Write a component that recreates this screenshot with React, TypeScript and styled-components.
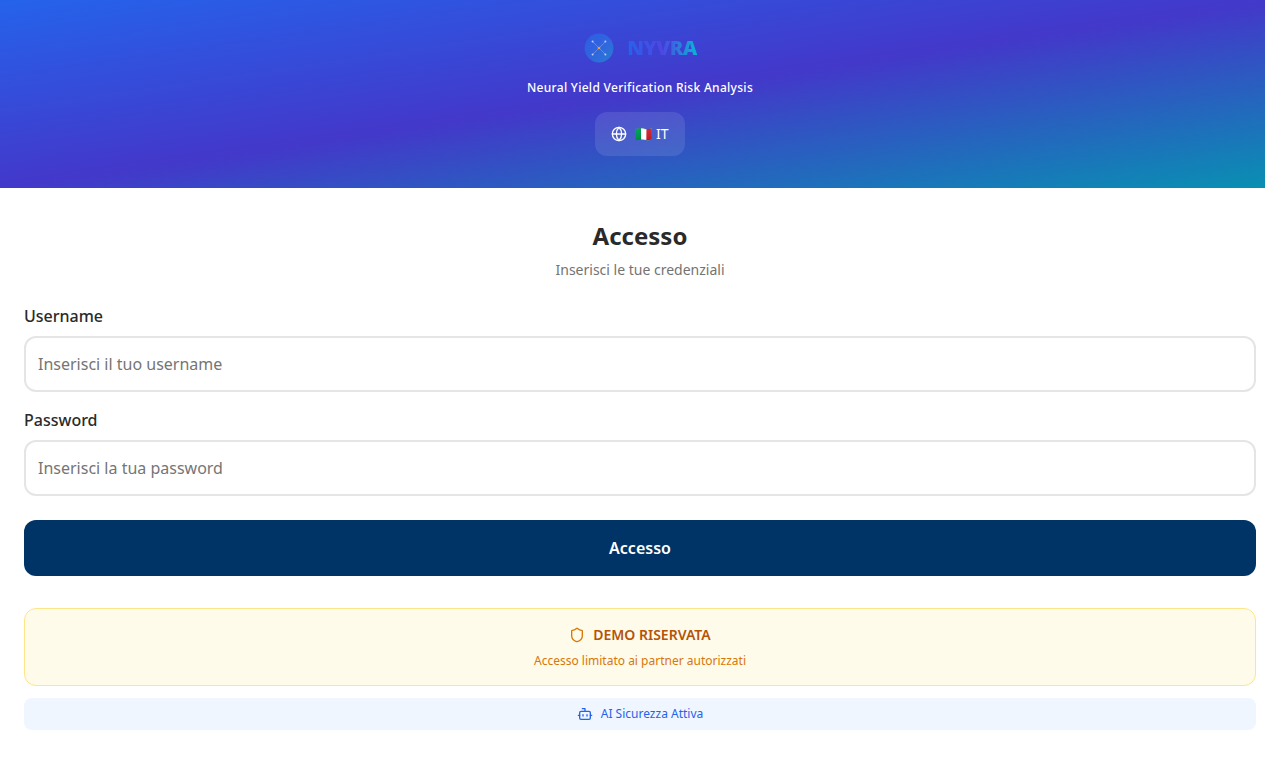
import React from "react";
import styled, { createGlobalStyle } from "styled-components";
import { Bot, Globe, Shield } from "lucide-react";

const GlobalStyle = createGlobalStyle`
  *, *::before, *::after { box-sizing: border-box; }
  body {
    margin: 0;
    background: #ffffff;
    color: #2a2a2a;
    font-family: "Noto Sans", sans-serif;
    font-size: 16px;
    line-height: 24px;
    overflow-x: hidden;
  }
  button, input { font: inherit; }
`;

const Page = styled.div`
  width: calc(100% + 15px);
`;

const Header = styled.header`
  display: flex;
  flex-direction: column;
  align-items: center;
  gap: 16px;
  padding: 32px 24px;
  background: linear-gradient(to bottom right, #2563eb, #4338ca, #0891b2);
`;

const Brand = styled.div`
  display: flex;
  align-items: center;
  gap: 12px;
  height: 32px;
`;

const BrandName = styled.h1`
  margin: 0;
  font-size: 20px;
  line-height: 28px;
  font-weight: 900;
  letter-spacing: -0.025em;
  color: transparent;
  background: linear-gradient(to right, #2563eb, #4f46e5, #06b6d4);
  background-clip: text;
  -webkit-background-clip: text;
`;

const Tagline = styled.p`
  margin: 0;
  font-size: 12px;
  line-height: 16px;
  font-weight: 500;
  letter-spacing: 0.025em;
  color: #ffffff;
`;

const LanguageButton = styled.button`
  display: flex;
  align-items: center;
  gap: 8px;
  height: 44px;
  padding: 0 16px;
  border: 0;
  border-radius: 12px;
  background: rgba(255, 255, 255, 0.1);
  color: #ffffff;
  font-size: 14px;
  line-height: 20px;
  cursor: pointer;
`;

const Main = styled.main`
  padding: 32px 24px;
`;

const Intro = styled.div`
  display: flex;
  flex-direction: column;
  gap: 8px;
  margin-bottom: 24px;
  text-align: center;
`;

const Title = styled.h2`
  margin: 0;
  font-size: 24px;
  line-height: 32px;
  font-weight: 700;
`;

const Subtitle = styled.p`
  margin: 0;
  font-size: 14px;
  line-height: 20px;
  color: #737373;
`;

const Form = styled.form`
  display: flex;
  flex-direction: column;
  gap: 16px;
`;

const Field = styled.div`
  display: flex;
  flex-direction: column;
  gap: 8px;
`;

const Label = styled.label`
  font-weight: 500;
`;

const Input = styled.input`
  width: 100%;
  height: 56px;
  padding: 0 12px;
  border: 2px solid #e5e5e5;
  border-radius: 12px;
  background: #ffffff;
  color: inherit;
  &::placeholder { color: #757575; }
`;

const SubmitButton = styled.button`
  height: 56px;
  margin-top: 8px;
  border: 0;
  border-radius: 12px;
  background: #003366;
  color: #ffffff;
  font-weight: 600;
  cursor: pointer;
`;

const Notices = styled.div`
  display: flex;
  flex-direction: column;
  gap: 12px;
  margin-top: 32px;
`;

const DemoNotice = styled.section`
  display: flex;
  flex-direction: column;
  align-items: center;
  gap: 8px;
  padding: 16px;
  border: 1px solid #fde68a;
  border-radius: 12px;
  background: #fffbeb;
  color: #d97706;
  font-size: 12px;
  line-height: 16px;
`;

const NoticeHeading = styled.div`
  display: flex;
  align-items: center;
  gap: 8px;
  font-size: 14px;
  line-height: 20px;
`;

const NoticeTitle = styled.strong`
  font-weight: 600;
  color: #b45309;
`;

const SecurityNotice = styled.div`
  display: flex;
  align-items: center;
  justify-content: center;
  gap: 8px;
  padding: 8px;
  border-radius: 8px;
  background: #eff6ff;
  color: #2563eb;
  font-size: 12px;
  line-height: 16px;
`;

const nodes = [[9.6, 9.6], [22.4, 9.6], [9.6, 22.4], [22.4, 22.4]];

function Logo() {
  return (
    <svg width="32" height="32" viewBox="0 0 32 32" aria-hidden="true">
      <defs>
        <linearGradient id="logo-fill" x1="0" y1="0" x2="1" y2="1">
          <stop offset="0" stopColor="#2b5fe6" />
          <stop offset="0.5" stopColor="#3068df" />
          <stop offset="1" stopColor="#2385d2" />
        </linearGradient>
      </defs>
      <circle cx="16" cy="16" r="14.4" fill="url(#logo-fill)" opacity="0.9" />
      <path d="M9.6 9.6 22.4 22.4M22.4 9.6 9.6 22.4" stroke="#ffffff" strokeWidth="0.6" opacity="0.4" />
      {nodes.map(([x, y]) => (
        <circle key={`${x}-${y}`} cx={x} cy={y} r="1" fill="#ffffff" opacity="0.65" />
      ))}
      <circle cx="16" cy="16" r="1.3" fill="#e8a33c" />
    </svg>
  );
}

export default function App() {
  return (
    <>
      <GlobalStyle />
      <Page>
        <Header>
          <Brand>
            <Logo />
            <BrandName>NYVRA</BrandName>
          </Brand>
          <Tagline>Neural Yield Verification Risk Analysis</Tagline>
          <LanguageButton type="button">
            <Globe size={16} aria-hidden="true" />
            <span>🇮🇹 IT</span>
          </LanguageButton>
        </Header>
        <Main>
          <Intro>
            <Title>Accesso</Title>
            <Subtitle>Inserisci le tue credenziali</Subtitle>
          </Intro>
          <Form onSubmit={(event) => event.preventDefault()}>
            <Field>
              <Label htmlFor="username">Username</Label>
              <Input id="username" type="text" placeholder="Inserisci il tuo username" />
            </Field>
            <Field>
              <Label htmlFor="password">Password</Label>
              <Input id="password" type="password" placeholder="Inserisci la tua password" />
            </Field>
            <SubmitButton type="submit">Accesso</SubmitButton>
          </Form>
          <Notices>
            <DemoNotice>
              <NoticeHeading>
                <Shield size={16} aria-hidden="true" />
                <NoticeTitle>DEMO RISERVATA</NoticeTitle>
              </NoticeHeading>
              <span>Accesso limitato ai partner autorizzati</span>
            </DemoNotice>
            <SecurityNotice>
              <Bot size={16} aria-hidden="true" />
              <span>AI Sicurezza Attiva</span>
            </SecurityNotice>
          </Notices>
        </Main>
      </Page>
    </>
  );
}
